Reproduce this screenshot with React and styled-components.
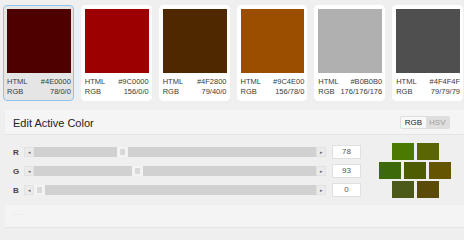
import React from 'react';
import styled, { createGlobalStyle } from 'styled-components';

const GlobalStyle = createGlobalStyle`
  body {
    margin: 0;
    background: #efefef;
    font-family: "Liberation Sans", Arial, sans-serif;
  }
`;

const swatches = [
  { html: '#4E0000', rgb: '78/0/0', active: true },
  { html: '#9C0000', rgb: '156/0/0' },
  { html: '#4F2800', rgb: '79/40/0' },
  { html: '#9C4E00', rgb: '156/78/0' },
  { html: '#B0B0B0', rgb: '176/176/176' },
  { html: '#4F4F4F', rgb: '79/79/79' },
];

const channels = [
  { label: 'R', value: 78 },
  { label: 'G', value: 93 },
  { label: 'B', value: 0 },
];

const bricks = [
  ['#4b7a00', '#5a6603'],
  ['#3c6a0a', '#4e5c00', '#655402'],
  ['#4b5919', '#5b4b08'],
];

const App = () => {
  return (
    <Page>
      <GlobalStyle />
      <SwatchGrid>
        {swatches.map((s) => (
          <Card key={s.html} $active={s.active}>
            <Swatch style={{ background: s.html }} />
            <InfoRow>
              <span>HTML</span>
              <span>{s.html}</span>
            </InfoRow>
            <InfoRow>
              <span>RGB</span>
              <span>{s.rgb}</span>
            </InfoRow>
          </Card>
        ))}
      </SwatchGrid>

      <Editor>
        <EditorHeader>
          <Title>Edit Active Color</Title>
          <Toggle>
            <ToggleButton $on>RGB</ToggleButton>
            <ToggleButton>HSV</ToggleButton>
          </Toggle>
        </EditorHeader>

        <EditorBody>
          <Sliders>
            {channels.map((c) => (
              <SliderRow key={c.label}>
                <ChannelLabel>{c.label}</ChannelLabel>
                <Track>
                  <ArrowButton>◂</ArrowButton>
                  <Rail>
                    <Thumb style={{ left: `${(c.value / 255) * 270}px` }} />
                  </Rail>
                  <ArrowButton>▸</ArrowButton>
                </Track>
                <ValueInput>{c.value}</ValueInput>
              </SliderRow>
            ))}
          </Sliders>

          <Bricks>
            {bricks.map((row, i) => (
              <BrickRow key={i}>
                {row.map((col) => (
                  <Brick key={col} $color={col} />
                ))}
              </BrickRow>
            ))}
          </Bricks>
        </EditorBody>

        <Footer>…</Footer>
      </Editor>
    </Page>
  );
};

export default App;

const Page = styled.div`
  width: 464px;
  height: 240px;
  overflow: hidden;
`;

// SWATCH CARDS
const SwatchGrid = styled.div`
  display: grid;
  grid-template-columns: repeat(6, 1fr);
  gap: 7px;
  padding: 5px 1px 0 3px;
`;

const Card = styled.div`
  height: 96px;
  box-sizing: border-box;
  padding: 3px 2px 0 3px;
  border-radius: 4px;
  border: 1px solid ${(p) => (p.$active ? '#8ec5ee' : '#fff')};
  background: ${(p) => (p.$active ? '#e5e5e5' : '#fff')};
`;

const Swatch = styled.div`
  height: 64px;
  margin-bottom: 4px;
`;

const InfoRow = styled.div`
  display: flex;
  justify-content: space-between;
  font-size: 7.5px;
  line-height: 10px;
  color: #3a3a3a;
`;

// EDITOR PANEL
const Editor = styled.div`
  margin: 9px 0 0 5px;
`;

const EditorHeader = styled.div`
  display: flex;
  align-items: center;
  justify-content: space-between;
  height: 24px;
  padding: 0 14px 0 8px;
  background: #f5f5f5;
  border-bottom: 1px solid #e4e4e4;
`;

const Title = styled.div`
  font-size: 11px;
  color: #222;
  padding-top: 1px;
`;

const Toggle = styled.div`
  display: flex;
  padding: 1px;
  background: #dedede;
  border-radius: 2px;
`;

const ToggleButton = styled.div`
  font-size: 8px;
  line-height: 11px;
  padding: 0 3.5px;
  color: ${(p) => (p.$on ? '#222' : '#a0a0a0')};
  background: ${(p) => (p.$on ? '#f8f8f8' : 'transparent')};
  border-radius: 1px;
`;

const EditorBody = styled.div`
  display: flex;
  align-items: flex-start;
  padding: 8px 13px 0 8px;
  height: 62px;
`;

const Sliders = styled.div`
  display: flex;
  flex-direction: column;
  gap: 5px;
  padding-top: 2px;
`;

const SliderRow = styled.div`
  display: flex;
  align-items: center;
  height: 14px;
`;

const ChannelLabel = styled.div`
  width: 11px;
  font-size: 8px;
  font-weight: bold;
  color: #444;
`;

const Track = styled.div`
  display: flex;
  width: 302px;
  height: 10px;
  background: #d1d1d1;
`;

const ArrowButton = styled.div`
  width: 10px;
  height: 10px;
  box-sizing: border-box;
  background: #ebebeb;
  border: 1px solid #e2e2e2;
  color: #666;
  font-size: 5px;
  line-height: 8px;
  text-align: center;
`;

const Rail = styled.div`
  position: relative;
  flex: 1;
`;

const Thumb = styled.div`
  position: absolute;
  top: 0;
  width: 11px;
  height: 10px;
  box-sizing: border-box;
  background: #ededed;
  border: 3px solid #f3f3f3;
  border-width: 2px 3px;
  &::after {
    content: '';
    display: block;
    height: 100%;
    background: #d9d9d9;
  }
`;

const ValueInput = styled.div`
  width: 29px;
  height: 14px;
  box-sizing: border-box;
  margin-left: 6px;
  background: #fff;
  border: 1px solid #e0e0e0;
  font-size: 8px;
  line-height: 12px;
  text-align: center;
  color: #555;
`;

const Bricks = styled.div`
  display: flex;
  flex-direction: column;
  align-items: center;
  gap: 2px;
  margin-left: auto;
  width: 72px;
`;

const BrickRow = styled.div`
  display: flex;
  gap: 3px;
`;

const Brick = styled.div`
  width: 22px;
  height: 17px;
  background: ${(p) => p.$color};
`;

const Footer = styled.div`
  height: 22px;
  padding: 0 8px;
  background: #f4f4f4;
  border-bottom: 1px solid #e6e6e6;
  color: #e0e0e0;
  font-size: 9px;
  line-height: 14px;
`;
